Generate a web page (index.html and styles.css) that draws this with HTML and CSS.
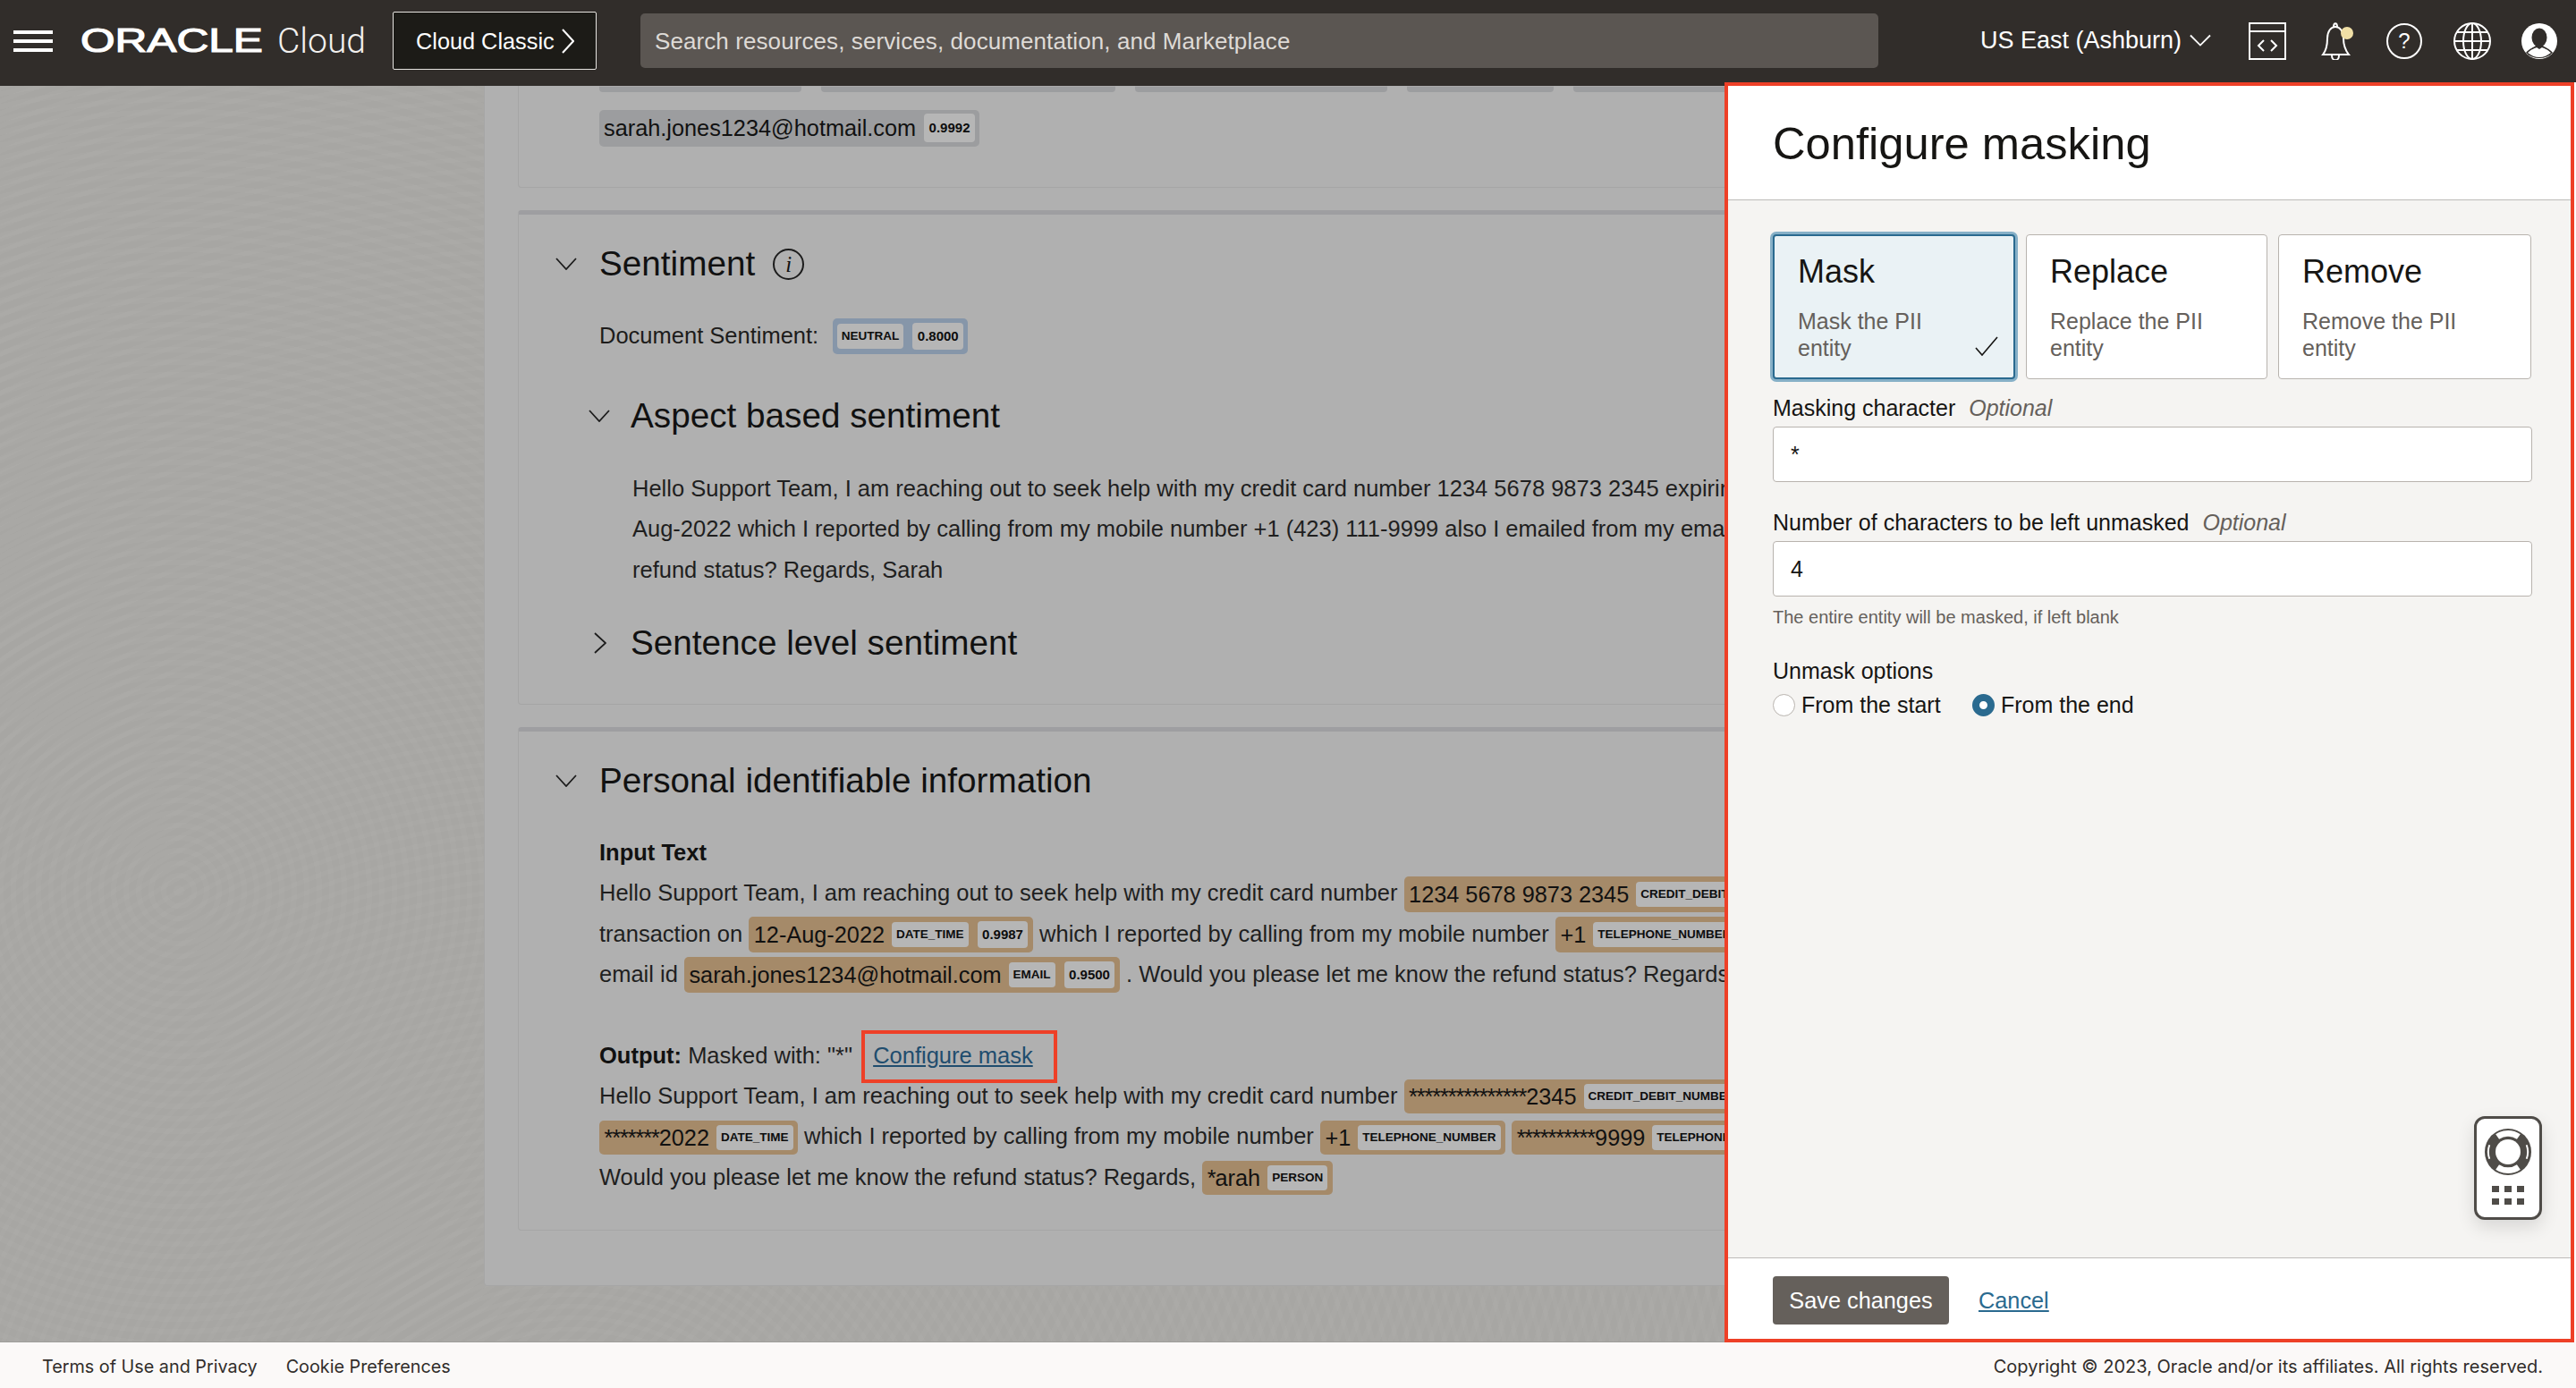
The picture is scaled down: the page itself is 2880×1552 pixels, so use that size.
FILE: index.html
```html
<!DOCTYPE html>
<html lang="en">
<head>
<meta charset="utf-8">
<title>Configure masking</title>
<link rel="stylesheet" href="styles.css">
</head>
<body>
<header class="topbar">
  <svg class="burger" width="44" height="24" viewBox="0 0 44 24"><path d="M0 2h44M0 12h44M0 22h44" stroke="#fff" stroke-width="4"/></svg>
  <div class="logo"><span class="logo-oracle">ORACLE</span><span class="logo-cloud">Cloud</span></div>
  <div class="classic">Cloud Classic
    <svg width="14" height="28" viewBox="0 0 14 28"><path d="M1 1l12 13L1 27" fill="none" stroke="#fff" stroke-width="2"/></svg>
  </div>
  <div class="search">Search resources, services, documentation, and Marketplace</div>
  <div class="region">US East (Ashburn)
    <svg width="26" height="15" viewBox="0 0 26 15"><path d="M1 1l12 12L25 1" fill="none" stroke="#fff" stroke-width="2"/></svg>
  </div>
  <svg class="tool tool-code" width="42" height="42" viewBox="0 0 42 42"><rect x="1" y="1" width="40" height="40" fill="none" stroke="#fff" stroke-width="2"/><path d="M1 10h40" stroke="#fff" stroke-width="2"/><path d="M17 20l-6 6 6 6M25 20l6 6-6 6" fill="none" stroke="#fff" stroke-width="2"/></svg>
  <svg class="tool tool-bell" width="40" height="42" viewBox="0 0 40 42"><path d="M2 36c4-5 5-10 5-18 0-8 4-13 9-13s9 5 9 13c0 8 2 13 6 18z" fill="none" stroke="#fff" stroke-width="2"/><path d="M12 37c0 7 8 7 8 0M14 5c0-5 4-5 4 0" fill="none" stroke="#fff" stroke-width="2"/><circle cx="29" cy="12" r="7" fill="#f0dfa6"/></svg>
  <div class="tool tool-help">?</div>
  <svg class="tool tool-globe" width="42" height="42" viewBox="0 0 42 42"><g fill="none" stroke="#fff" stroke-width="2"><circle cx="21" cy="21" r="20"/><ellipse cx="21" cy="21" rx="10" ry="20"/><path d="M21 1v40M1 21h40M4 11h34M4 31h34"/></g></svg>
  <svg class="tool tool-user" width="40" height="40" viewBox="0 0 40 40"><circle cx="20" cy="20" r="20" fill="#fff"/><ellipse cx="20" cy="16" rx="8.500" ry="10.500" fill="#312d2a"/><path d="M5 33c4-5 9-6 11-8h8c2 2 7 3 11 8-4 4-9 6-15 6s-11-2-15-6z" fill="#312d2a"/><path d="M7 33c4-4 8-5 10-6l3 2 3-2c2 1 6 2 10 6-4 3-8 5-13 5s-9-2-13-5z" fill="#fff"/></svg>
</header>

<main class="page">
  <div class="sheet">
    <section class="card card-first">
      <div class="cut-row">
        <span class="cut-chip w1"></span><span class="cut-chip w2"></span><span class="cut-chip w3"></span><span class="cut-chip w4"></span><span class="cut-chip w5"></span>
      </div>
      <div class="email-row"><span class="chip chip-grey">sarah.jones1234@hotmail.com<span class="score score-small">0.9992</span></span></div>
    </section>

    <section class="card card-sentiment">
      <div class="head">
        <svg class="chev" width="24" height="14" viewBox="0 0 24 14"><path d="M1 1l11 12L23 1" fill="none" stroke="#1c1c1c" stroke-width="1.8"/></svg>
        <h2>Sentiment</h2>
        <span class="info">i</span>
      </div>
      <div class="doc-row">Document Sentiment: <span class="chip chip-blue"><span class="tag">NEUTRAL</span><span class="score">0.8000</span></span></div>
      <div class="head head-aspect">
        <svg class="chev" width="24" height="14" viewBox="0 0 24 14"><path d="M1 1l11 12L23 1" fill="none" stroke="#1c1c1c" stroke-width="1.8"/></svg>
        <h2>Aspect based sentiment</h2>
      </div>
      <div class="para">
        <p class="line">Hello Support Team, I am reaching out to seek help with my credit card number 1234 5678 9873 2345 expiring</p>
        <p class="line">Aug-2022 which I reported by calling from my mobile number +1 (423) 111-9999 also I emailed from my email</p>
        <p class="line">refund status? Regards, Sarah</p>
      </div>
      <div class="head head-sentence">
        <svg class="chev-r" width="14" height="24" viewBox="0 0 14 24"><path d="M1 1l12 11L1 23" fill="none" stroke="#1c1c1c" stroke-width="1.8"/></svg>
        <h2>Sentence level sentiment</h2>
      </div>
    </section>

    <section class="card card-pii">
      <div class="head">
        <svg class="chev" width="24" height="14" viewBox="0 0 24 14"><path d="M1 1l11 12L23 1" fill="none" stroke="#1c1c1c" stroke-width="1.8"/></svg>
        <h2>Personal identifiable information</h2>
      </div>
      <div class="pii-text">
        <p class="line"><b>Input Text</b></p>
        <p class="line">Hello Support Team, I am reaching out to seek help with my credit card number <span class="chip chip-tan">1234 5678 9873 2345<span class="tag">CREDIT_DEBIT_NUMBER</span><span class="score">0.9990</span></span></p>
        <p class="line">transaction on <span class="chip chip-tan">12-Aug-2022<span class="tag">DATE_TIME</span><span class="score">0.9987</span></span> which I reported by calling from my mobile number <span class="chip chip-tan">+1<span class="tag">TELEPHONE_NUMBER</span><span class="score">0.9900</span></span></p>
        <p class="line">email id <span class="chip chip-tan">sarah.jones1234@hotmail.com<span class="tag">EMAIL</span><span class="score">0.9500</span></span> . Would you please let me know the refund status? Regards,</p>
        <p class="line line-output"><b>Output:</b> Masked with: "*" <span class="callout"><a class="link-dim" href="#">Configure mask</a></span></p>
        <p class="line">Hello Support Team, I am reaching out to seek help with my credit card number <span class="chip chip-tan"><span class="stars">***************</span>2345<span class="tag">CREDIT_DEBIT_NUMBER</span></span></p>
        <p class="line"><span class="chip chip-tan chip-start"><span class="stars">*******</span>2022<span class="tag">DATE_TIME</span></span> which I reported by calling from my mobile number <span class="chip chip-tan">+1<span class="tag">TELEPHONE_NUMBER</span></span> <span class="chip chip-tan"><span class="stars">**********</span>9999<span class="tag">TELEPHONE_NUMBER</span></span></p>
        <p class="line">Would you please let me know the refund status? Regards, <span class="chip chip-tan"><span class="stars">*</span>arah<span class="tag">PERSON</span></span></p>
      </div>
    </section>
  </div>
</main>

<footer class="footer">
  <a href="#">Terms of Use and Privacy</a>
  <a href="#">Cookie Preferences</a>
  <span class="copyright">Copyright © 2023, Oracle and/or its affiliates. All rights reserved.</span>
</footer>

<aside class="drawer">
  <div class="drawer-head"><h1>Configure masking</h1></div>
  <div class="drawer-body">
    <div class="options">
      <div class="option option-on">
        <div class="opt-title">Mask</div>
        <div class="opt-desc">Mask the PII<br>entity</div>
        <svg class="tick" width="26" height="22" viewBox="0 0 26 22"><path d="M1 13l7 8L25 1" fill="none" stroke="#161513" stroke-width="1.6"/></svg>
      </div>
      <div class="option">
        <div class="opt-title">Replace</div>
        <div class="opt-desc">Replace the PII<br>entity</div>
      </div>
      <div class="option">
        <div class="opt-title">Remove</div>
        <div class="opt-desc">Remove the PII<br>entity</div>
      </div>
    </div>
    <div class="label label-one">Masking character <i>Optional</i></div>
    <div class="input">*</div>
    <div class="label label-two">Number of characters to be left unmasked <i>Optional</i></div>
    <div class="input">4</div>
    <div class="hint">The entire entity will be masked, if left blank</div>
    <div class="label label-three">Unmask options</div>
    <div class="radios">
      <span class="radio"></span><span class="radio-text">From the start</span>
      <span class="radio radio-on"></span><span class="radio-text">From the end</span>
    </div>
    <div class="helper">
      <svg width="54" height="54" viewBox="0 0 56 56">
        <circle cx="28" cy="28" r="27" fill="#4f4c48"/>
        <circle cx="28" cy="28" r="14.500" fill="#fff"/>
        <path d="M13.700 7.500A25 25 0 0 1 42.300 7.500L38.300 13.300A18 18 0 0 0 17.700 13.300ZM13.700 48.500A25 25 0 0 0 42.300 48.500L38.300 42.700A18 18 0 0 1 17.700 42.700Z" fill="#fff"/>
        <path d="M6.500 20a23 23 0 0 0 0 16M49.500 20a23 23 0 0 1 0 16" fill="none" stroke="#fff" stroke-width="2"/>
      </svg>
      <div class="helper-dots"><i></i><i></i><i></i><i></i><i></i><i></i></div>
    </div>
  </div>
  <div class="drawer-foot">
    <button class="save">Save changes</button>
    <a class="cancel" href="#">Cancel</a>
  </div>
</aside>
</body>
</html>
```
FILE: styles.css
```css
* { box-sizing: border-box; }
html, body { margin: 0; padding: 0; }
body {
  width: 2880px;
  height: 1552px;
  overflow: hidden;
  position: relative;
  display: flex;
  flex-direction: column;
  background: #fff;
  font-family: "Liberation Sans", Arial, sans-serif;
  font-size: 25.5px;
  color: #1d1c1b;
}
h1, h2, p { margin: 0; font-weight: 400; }

/* top bar */
.topbar {
  height: 96px;
  flex: none;
  background: #312d2a;
  color: #fff;
  display: flex;
  align-items: center;
  padding-bottom: 5px;
  position: relative;
}
.burger { margin-left: 15px; flex: none; }
.logo { margin-left: 31px; width: 324px; height: 40px; display: flex; align-items: center; flex: none; }
.logo-oracle {
  font-size: 37px;
  font-weight: 400;
  -webkit-text-stroke: 1.2px #fff;
  width: 220px;
  flex: none;
  display: inline-block;
  transform: scaleX(1.34);
  transform-origin: left center;
  line-height: 40px;
}
.logo-cloud {
  font-family: Roboto, "Liberation Sans", sans-serif;
  font-weight: 300;
  font-size: 39px;
  color: #f2f0ee;
  line-height: 40px;
}
.classic {
  margin-left: 25px;
  width: 228px;
  height: 65px;
  flex: none;
  background: #1c1b17;
  border: 1px solid #e6e4e0;
  border-radius: 2px;
  padding: 1px 0 0 25px;
  display: flex;
  align-items: center;
  gap: 8px;
  font-size: 25.3px;
}
.search {
  margin-left: 49px;
  width: 1384px;
  height: 61px;
  flex: none;
  background: #5b5652;
  border-radius: 5px;
  color: #dedad6;
  padding: 1px 0 0 16px;
  display: flex;
  align-items: center;
  font-size: 26px;
  letter-spacing: 0.09px;
}
.region {
  margin-left: 114px;
  flex: none;
  display: flex;
  align-items: center;
  gap: 9px;
  font-size: 27px;
  white-space: nowrap;
  width: 258px;
}
.tool { flex: none; }
.tool-code { margin-left: 42px; }
.tool-bell { margin-left: 39px; }
.tool-help {
  margin-left: 33px;
  width: 40px;
  height: 40px;
  border: 2px solid #fff;
  border-radius: 50%;
  text-align: center;
  line-height: 36px;
  font-size: 24px;
}
.tool-globe { margin-left: 35px; }
.tool-user { margin-left: 34px; }

/* page background */
.page {
  height: 1405px;
  flex: none;
  overflow: hidden;
  background-color: #a9a8a5;
  background-image:
    repeating-radial-gradient(circle at 200px 900px, rgba(255,255,255,.012) 0 6px, rgba(0,0,0,.008) 6px 14px),
    repeating-radial-gradient(circle at 640px 1640px, rgba(255,255,255,.012) 0 5px, rgba(0,0,0,.008) 5px 13px);
  border-bottom: 1px solid #9f9e9b;
}
.sheet {
  margin-left: 541px;
  width: 1400px;
  height: 1342px;
  background: #b0b0b0;
  border-left: 1px solid #a6a6a6;
  border-bottom: 1px solid #a6a6a6;
  border-radius: 0 0 0 4px;
  overflow: hidden;
}
.card {
  margin-left: 37px;
  border: 1px solid #a5a5a5;
  border-right: 0;
  border-radius: 4px 0 0 4px;
  padding-left: 41px;
}
.card-first { height: 114px; border-top: 0; padding-left: 90px; border-radius: 0 0 0 4px; }
.cut-row { display: flex; height: 7px; gap: 22px; overflow: hidden; }
.cut-chip { height: 7px; background: #9c9d9f; border-radius: 0 0 4px 4px; flex: none; box-shadow: inset 0 1px 0 #aaa; }
.w1 { width: 226px; } .w2 { width: 329px; } .w3 { width: 282px; } .w4 { width: 164px; } .w5 { width: 200px; }
.email-row { margin-top: 19px; line-height: 41px; height: 41px; }
.card-sentiment { margin-top: 25px; height: 553px; border-top: 5px solid #9e9ea1; padding-top: 32px; }
.card-pii { margin-top: 25px; height: 563px; border-top: 5px solid #9e9ea1; padding-top: 32px; }

.head { display: flex; align-items: center; height: 46px; }
.head h2 { font-size: 38.7px; color: #111; line-height: 46px; white-space: nowrap; }
.chev { flex: none; margin-right: 25px; }
.chev-r { flex: none; }
.info {
  margin-left: 20px;
  width: 35px;
  height: 35px;
  border: 2px solid #1c1c1c;
  border-radius: 50%;
  font-family: "Liberation Serif", serif;
  font-style: italic;
  font-size: 25px;
  line-height: 31px;
  text-align: center;
  color: #111;
}
.doc-row { margin: 35px 0 0 49px; height: 45px; line-height: 45px; white-space: nowrap; }
.head-aspect { margin: 44px 0 0 37px; }
.head-aspect h2 { margin-left: -2px; }
.para { margin: 36px 0 0 86px; }
.line { height: 45.4px; line-height: 45.4px; white-space: nowrap; color: #1f1f1f; }
.head-sentence { margin: 36px 0 0 43px; }
.head-sentence h2 { margin-left: 27px; }

.pii-text { margin: 35px 0 0 49px; }
.line-output { margin-top: 45px; }
b { font-weight: 700; color: #111; }

/* chips */
.chip {
  display: inline-flex;
  align-items: center;
  padding: 5px 5.500px;
  border-radius: 5px;
  line-height: 28px;
  vertical-align: middle;
  white-space: nowrap;
  font-size: 25.3px;
  color: #111;
  position: relative;
  top: -1px;
}
.chip-tan { background: #a58a69; }
.chip-grey { background: #9c9d9f; height: 41px; padding: 0 5px; }
.chip-blue { background: #8696a9; margin-left: 9px; padding: 5px 4.500px; }
.tag, .score {
  background: #b6b6b6;
  border-radius: 4px;
  font-weight: 700;
  color: #0d0d0d;
  display: inline-block;
  height: 28px;
  line-height: 28px;
  padding: 0 5px;
  margin-left: 8px;
}
.tag { font-size: 13.5px; }
.score { font-size: 15px; height: 30px; line-height: 30px; margin-left: 10px; padding: 0 5.500px; }
.chip-blue .tag { margin-left: 0; }
.score-small { height: 32px; line-height: 32px; margin-left: 9px; }
.stars { letter-spacing: -1.1px; }
.chip-start { margin-left: 0; }
.callout {
  display: inline-block;
  border: 4px solid #ee4027;
  height: 59px;
  line-height: 49px;
  padding: 0 23px 0 9px;
  margin: -8px 0 -8px 3px;
  vertical-align: middle;
}
.link-dim { color: #1f4d6e; text-decoration: underline; }

/* footer */
.footer {
  flex: 1;
  background: #fbf9f8;
  display: flex;
  align-items: center;
  padding: 2px 37px 0 47px;
  font-family: Inter, "Liberation Sans", sans-serif;
  font-size: 19.8px;
  color: #312d2a;
}
.footer a { color: #312d2a; text-decoration: none; margin-right: 32px; }
.copyright { margin-left: auto; font-size: 20px; }

/* drawer */
.drawer {
  position: absolute;
  left: 1928px;
  top: 92px;
  width: 950px;
  height: 1409px;
  border: 4px solid #ee4027;
  background: #fff;
  display: flex;
  flex-direction: column;
  box-shadow: 2px 0 0 #fff;
}
.drawer-head {
  height: 128px;
  flex: none;
  display: flex;
  align-items: center;
  padding: 0 0 0 50px;
  border-bottom: 1px solid #bdbbb8;
}
.drawer-head h1 { font-size: 50.7px; color: #161513; position: relative; top: 1px; }
.drawer-body {
  flex: 1;
  background: #f5f4f2;
  padding: 38px 43px 0 50px;
  position: relative;
}
.drawer-foot {
  height: 91px;
  flex: none;
  border-top: 1px solid #bdbbb8;
  display: flex;
  align-items: center;
  padding: 4px 0 0 50px;
  background: #fff;
}
.options { display: grid; grid-template-columns: 271px 270px 283px; gap: 12px; height: 162px; }
.option {
  background: #fff;
  border: 1px solid #b8b3ae;
  border-radius: 4px;
  padding: 18px 0 0 26px;
  position: relative;
}
.option-on {
  background: #eaf2f5;
  border: 2px solid #2a6a8f;
  box-shadow: 0 0 0 3px #86b0c7;
  padding: 17px 0 0 26px;
}
.opt-title { font-size: 36px; line-height: 46px; color: #161513; }
.opt-desc { font-size: 25px; line-height: 30px; color: #65605b; margin-top: 17px; }
.tick { position: absolute; right: 17px; bottom: 24px; }
.label { height: 30px; line-height: 30px; color: #161513; white-space: nowrap; font-size: 25px; }
.label i { color: #65605b; margin-left: 8px; }
.label-one { margin-top: 17px; }
.label-two { margin-top: 30px; }
.label-three { margin-top: 33px; }
.input {
  margin-top: 6px;
  height: 62px;
  background: #fff;
  border: 1px solid #b8b3ae;
  border-radius: 4px;
  line-height: 60px;
  padding-left: 19px;
  color: #161513;
  font-size: 25px;
}
.hint { margin-top: 11px; height: 24px; line-height: 24px; font-size: 20px; color: #65605b; }
.radios { margin-top: 8px; height: 30px; display: flex; align-items: center; font-size: 25px; color: #161513; }
.radio { width: 25px; height: 25px; border-radius: 50%; border: 1px solid #b8b3ae; background: #fff; flex: none; }
.radio-on { background: #fff; border: 8px solid #2a6a8f; }
.radio-text { margin-left: 7px; width: 191px; }
.helper {
  position: absolute;
  right: 32px;
  top: 1024px;
  width: 76px;
  height: 116px;
  background: #fff;
  border: 3px solid #4f4c48;
  border-radius: 12px;
  box-shadow: 0 8px 20px rgba(0,0,0,.12);
  display: flex;
  flex-direction: column;
  align-items: center;
  padding-top: 10px;
}
.helper-dots { display: grid; grid-template-columns: repeat(3, 8px); gap: 7px 6px; margin-top: 11px; }
.helper-dots i { display: block; width: 8px; height: 7px; background: #4f4c48; }
.save {
  width: 197px;
  height: 54px;
  border: 0;
  border-radius: 4px;
  background: #65605b;
  color: #fff;
  font-family: inherit;
  font-size: 25.3px;
  padding: 0;
}
.cancel { margin-left: 33px; color: #2a6a8f; text-decoration: underline; font-size: 25.3px; }
```
